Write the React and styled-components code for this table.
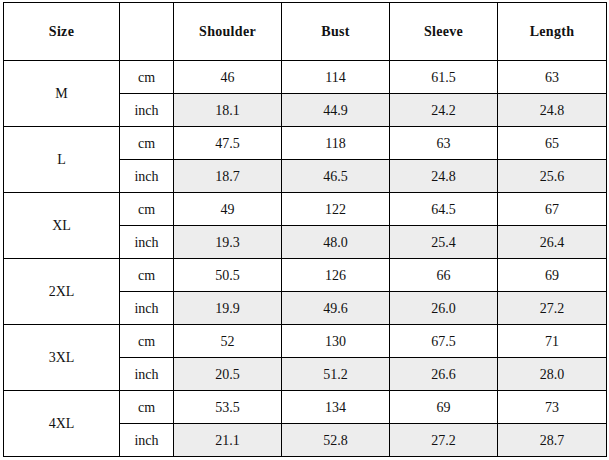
import React from 'react';
import styled, { createGlobalStyle } from 'styled-components';

const GlobalStyle = createGlobalStyle`
    html, body {
        margin:0;
        padding:0;
        background:#fff;
    }
`

const Page = styled.div`
    padding:2px 0 0 3px;
    font-family:"Liberation Serif", "Times New Roman", serif;
    color:#111;
`

const Table = styled.table`
    border-collapse:collapse;
    table-layout:fixed;
    width:603px;
    border:1px solid #000;
`

const HeadCell = styled.th`
    height:56px;
    padding:1px 0 0;
    border:1px solid #000;
    font-size:14px;
    font-weight:bold;
    letter-spacing:0.3px;
    text-align:center;
    vertical-align:middle;
`

const Cell = styled.td`
    height:31px;
    padding:1px 0 0;
    border:1px solid #000;
    font-size:14px;
    text-align:center;
    vertical-align:middle;
    background:${props => props.$shade ? '#ededed' : '#fff'};
`

const columns = ['Shoulder', 'Bust', 'Sleeve', 'Length']
const widths = [116, 54, 108, 108, 108, 109]

const sizes = [
    { name: 'M', cm: ['46', '114', '61.5', '63'], inch: ['18.1', '44.9', '24.2', '24.8'] },
    { name: 'L', cm: ['47.5', '118', '63', '65'], inch: ['18.7', '46.5', '24.8', '25.6'] },
    { name: 'XL', cm: ['49', '122', '64.5', '67'], inch: ['19.3', '48.0', '25.4', '26.4'] },
    { name: '2XL', cm: ['50.5', '126', '66', '69'], inch: ['19.9', '49.6', '26.0', '27.2'] },
    { name: '3XL', cm: ['52', '130', '67.5', '71'], inch: ['20.5', '51.2', '26.6', '28.0'] },
    { name: '4XL', cm: ['53.5', '134', '69', '73'], inch: ['21.1', '52.8', '27.2', '28.7'] },
]

const App = () => {
    return(
        <Page>
            <GlobalStyle />
            <Table>
                <colgroup>
                    {widths.map((w, i) => <col key={i} style={{ width: w }} />)}
                </colgroup>
                <thead>
                    <tr>
                        <HeadCell>Size</HeadCell>
                        <HeadCell></HeadCell>
                        {columns.map(c => <HeadCell key={c}>{c}</HeadCell>)}
                    </tr>
                </thead>
                <tbody>
                    {sizes.map(s => (
                        <React.Fragment key={s.name}>
                            <tr>
                                <Cell rowSpan={2}>{s.name}</Cell>
                                <Cell>cm</Cell>
                                {s.cm.map((v, i) => <Cell key={i}>{v}</Cell>)}
                            </tr>
                            <tr>
                                <Cell>inch</Cell>
                                {s.inch.map((v, i) => <Cell key={i} $shade>{v}</Cell>)}
                            </tr>
                        </React.Fragment>
                    ))}
                </tbody>
            </Table>
        </Page>
    )
}
export default App
